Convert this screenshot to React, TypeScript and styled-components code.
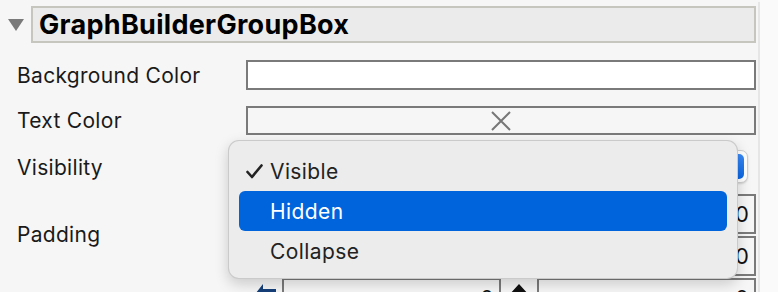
import styled, { createGlobalStyle } from "styled-components";

const GlobalStyle = createGlobalStyle`
  html, body {
    margin: 0;
    padding: 0;
    background: #f6f6f6;
  }
  body {
    font-family: "Inter", "Liberation Sans", sans-serif;
    color: #1c1c1c;
    overflow: hidden;
  }
`;

type PadCell = { icon: "left" | "up" | "none"; value: string };

const padRows: PadCell[][] = [
  [{ icon: "none", value: "0" }, { icon: "none", value: "0" }],
  [{ icon: "none", value: "0" }, { icon: "none", value: "0" }],
  [{ icon: "left", value: "0" }, { icon: "up", value: "0" }],
];

function ArrowIcon({ dir }: { dir: "left" | "up" | "none" }): JSX.Element | null {
  if (dir === "left") {
    return (
      <svg width="24" height="28" viewBox="0 0 24 28">
        <path d="M0 14 L11 0 L11 5 L24 5 L24 23 L11 23 L11 28 Z" fill="#16407a" />
      </svg>
    );
  }
  if (dir === "up") {
    return (
      <svg width="20" height="26" viewBox="0 0 20 26">
        <path d="M10 0 L20 11 L14 11 L14 26 L6 26 L6 11 L0 11 Z" fill="#111" />
      </svg>
    );
  }
  return null;
}

function App(): JSX.Element {
  return (
    <Page>
      <GlobalStyle />
      <Panel>
        <Header>
          <Triangle />
          <TitleBox>GraphBuilderGroupBox</TitleBox>
        </Header>

        <Row $top={17} $height={30}>
          <Label>Background Color</Label>
          <Field $bg="#ffffff" />
        </Row>

        <Row $top={16} $height={29}>
          <Label>Text Color</Label>
          <Field $bg="#f6f6f6">
            <svg width="20" height="20" viewBox="0 0 20 20">
              <path d="M1 1 L19 19 M19 1 L1 19" stroke="#777" strokeWidth="2" />
            </svg>
          </Field>
        </Row>

        <Row $top={15} $height={33}>
          <Label $shift={2}>Visibility</Label>
          <Select>
            <BlueCap />
          </Select>
        </Row>

        <PaddingRow>
          <PaddingLabel>Padding</PaddingLabel>
          <PadGroup>
            {padRows.map((row, i) => (
              <PadLine key={i}>
                {row.map((cell, j) => (
                  <PadPair key={j}>
                    <PadIcon>
                      <ArrowIcon dir={cell.icon} />
                    </PadIcon>
                    <PadInput>{cell.value}</PadInput>
                  </PadPair>
                ))}
              </PadLine>
            ))}
          </PadGroup>
        </PaddingRow>

        <Menu>
          <MenuItem>
            <Check>
              <svg width="17" height="15" viewBox="0 0 17 15">
                <path d="M1.5 8 L6 13 L15.5 1.5" stroke="#222" strokeWidth="2.6" fill="none" strokeLinecap="round" strokeLinejoin="round" />
              </svg>
            </Check>
            Visible
          </MenuItem>
          <MenuItem $active>Hidden</MenuItem>
          <MenuItem>Collapse</MenuItem>
        </Menu>
      </Panel>
      <Divider />
      <Strip />
    </Page>
  );
}

const Page = styled.div`
  display: flex;
  width: 778px;
  height: 292px;
  overflow: hidden;
`;

const Panel = styled.div`
  position: relative;
  width: 756px;
  padding-right: 2px;
  background: #f6f6f6;
  display: flex;
  flex-direction: column;
  & > * {
    flex-shrink: 0;
  }
`;

const Divider = styled.div`
  width: 2px;
  margin-top: 2px;
  background: #e6e6e6;
`;

const Strip = styled.div`
  flex: 1;
  background: #fafafa;
`;

const Header = styled.div`
  display: flex;
  align-items: center;
  padding: 6px 0 0 8px;
`;

const Triangle = styled.div`
  width: 0;
  height: 0;
  border-left: 8.5px solid transparent;
  border-right: 8.5px solid transparent;
  border-top: 12px solid #7a7a7a;
  margin-right: 7px;
`;

const TitleBox = styled.div`
  flex: 1;
  height: 33px;
  box-sizing: content-box;
  border: 2px solid #c6c6be;
  background: #ebebeb;
  font-size: 27px;
  font-weight: 700;
  color: #000;
  line-height: 33px;
  padding-left: 6px;
  letter-spacing: 0.3px;
  white-space: nowrap;
`;

const Row = styled.div<{ $top: number; $height: number }>`
  display: flex;
  align-items: center;
  margin-top: ${(p) => p.$top}px;
  height: ${(p) => p.$height}px;
`;

const Label = styled.div<{ $shift?: number }>`
  width: 229px;
  padding-left: 17px;
  padding-top: ${(p) => p.$shift ?? 0}px;
  font-size: 21px;
  letter-spacing: 0.3px;
  color: #1a1a1a;
`;

const Field = styled.div<{ $bg: string }>`
  box-sizing: border-box;
  width: 510px;
  height: 100%;
  border: 2px solid #7a7a7a;
  background: ${(p) => p.$bg};
  display: flex;
  align-items: center;
  justify-content: center;
`;

const Select = styled.div`
  box-sizing: border-box;
  width: 502px;
  height: 100%;
  border: 1px solid #cfcfcf;
  border-radius: 7px;
  background: #ffffff;
  box-shadow: 0 1px 2px rgba(0, 0, 0, 0.15);
  display: flex;
  justify-content: flex-end;
  padding: 3px;
`;

const BlueCap = styled.div`
  width: 24px;
  border-radius: 5px;
  background: linear-gradient(#3a8af7, #0a66e4);
`;

const PaddingRow = styled.div`
  display: flex;
  margin-top: 11px;
`;

const PaddingLabel = styled.div`
  width: 229px;
  padding-left: 17px;
  padding-top: 28px;
  font-size: 21px;
  letter-spacing: 0.3px;
  color: #1a1a1a;
`;

const PadGroup = styled.div`
  display: flex;
  flex-direction: column;
  gap: 2px;
  width: 510px;
`;

const PadLine = styled.div`
  display: flex;
  height: 40px;
`;

const PadPair = styled.div`
  display: flex;
  width: 255px;
`;

const PadIcon = styled.div`
  width: 36px;
  display: flex;
  align-items: flex-start;
  justify-content: center;
  padding-top: 6px;
`;

const PadInput = styled.div`
  box-sizing: border-box;
  flex: 1;
  border: 2px solid #7a7a7a;
  background: #f6f6f6;
  font-size: 22px;
  color: #111;
  display: flex;
  align-items: center;
  justify-content: flex-end;
  padding-right: 5px;
`;

const Menu = styled.div`
  position: absolute;
  left: 228px;
  top: 140px;
  width: 510px;
  height: 139px;
  box-sizing: border-box;
  padding: 10px 10px 9px;
  background: #ececec;
  border: 1px solid rgba(0, 0, 0, 0.14);
  border-radius: 11px;
  box-shadow: 0 5px 14px rgba(0, 0, 0, 0.18);
  display: flex;
  flex-direction: column;
`;

const MenuItem = styled.div<{ $active?: boolean }>`
  position: relative;
  height: 40px;
  flex-shrink: 0;
  display: flex;
  align-items: center;
  padding-left: 31px;
  border-radius: 6px;
  font-size: 21px;
  letter-spacing: 0.4px;
  color: ${(p) => (p.$active ? "#ffffff" : "#222222")};
  background: ${(p) => (p.$active ? "#0064dc" : "transparent")};
`;

const Check = styled.span`
  position: absolute;
  left: 7px;
  top: 13px;
  display: flex;
`;

export default App;
